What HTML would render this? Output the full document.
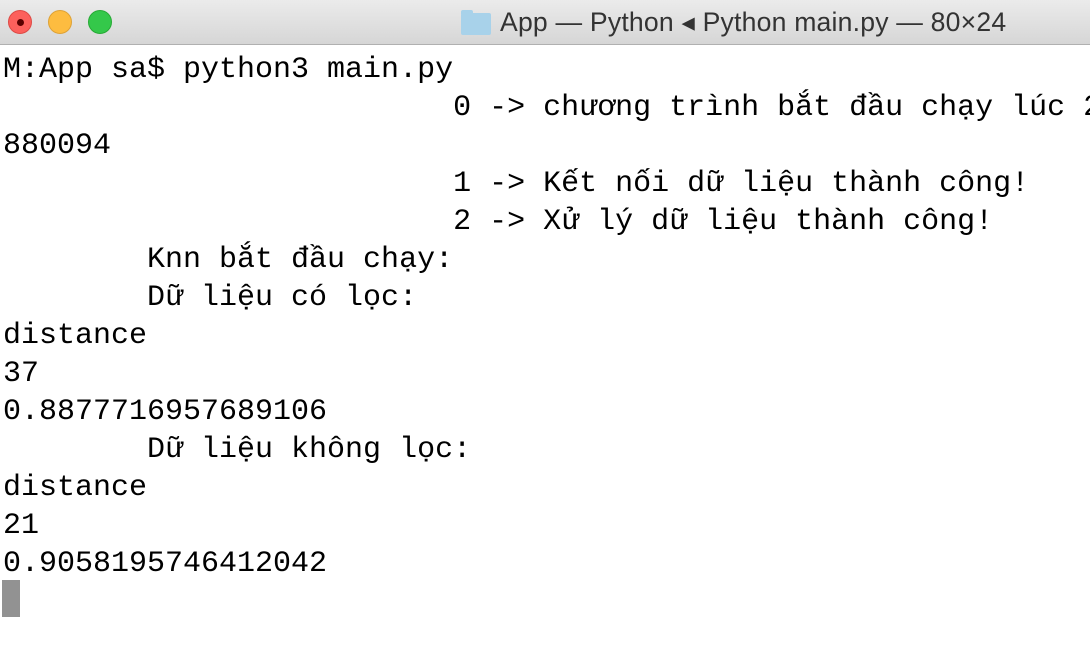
<!DOCTYPE html>
<html><head><meta charset="utf-8"><style>
html,body{margin:0;padding:0;width:1090px;height:668px;overflow:hidden;background:#fff}
.tb{position:absolute;left:0;top:0;width:1090px;height:44px;background:linear-gradient(#ebebeb,#d6d6d6);border-bottom:1px solid #b0b0b0}
.dot{position:absolute;top:10px;width:24px;height:24px;border-radius:50%}
.title{position:absolute;left:500px;top:7px;font:26.6px "Liberation Sans",sans-serif;color:#333;white-space:pre;letter-spacing:0.2px}
.folder{position:absolute;left:461px;top:13px;width:30px;height:22px;background:#a8d2ea;border-radius:2px}
.folder:before{content:"";position:absolute;left:0;top:-3px;width:12px;height:4px;background:#a8d2ea;border-radius:2px 2px 0 0}
pre{position:absolute;left:3px;top:51px;margin:0;font:30px/38px "Liberation Mono","DejaVu Sans Mono",monospace;color:#000}
.cur{position:absolute;left:2px;top:580px;width:18px;height:37px;background:#929292}
</style></head><body>
<div class="tb">
<div class="dot" style="left:8px;background:#fc605c;border:1px solid #de4a45;box-sizing:border-box"><div style="position:absolute;left:8px;top:8px;width:7px;height:7px;border-radius:50%;background:#5a0000"></div></div>
<div class="dot" style="left:48px;background:#fdbc40;border:1px solid #dea236;box-sizing:border-box"></div>
<div class="dot" style="left:88px;background:#34c84a;border:1px solid #27aa35;box-sizing:border-box"></div>
<div class="folder"></div>
<div class="title">App — Python ◂ Python main.py — 80×24</div>
</div>
<pre>M:App sa$ python3 main.py
                         0 -&gt; chương trình bắt đầu chạy lúc 2
880094
                         1 -&gt; Kết nối dữ liệu thành công!
                         2 -&gt; Xử lý dữ liệu thành công!
        Knn bắt đầu chạy:
        Dữ liệu có lọc:
distance
37
0.8877716957689106
        Dữ liệu không lọc:
distance
21
0.9058195746412042</pre>
<div class="cur"></div>
</body></html>
